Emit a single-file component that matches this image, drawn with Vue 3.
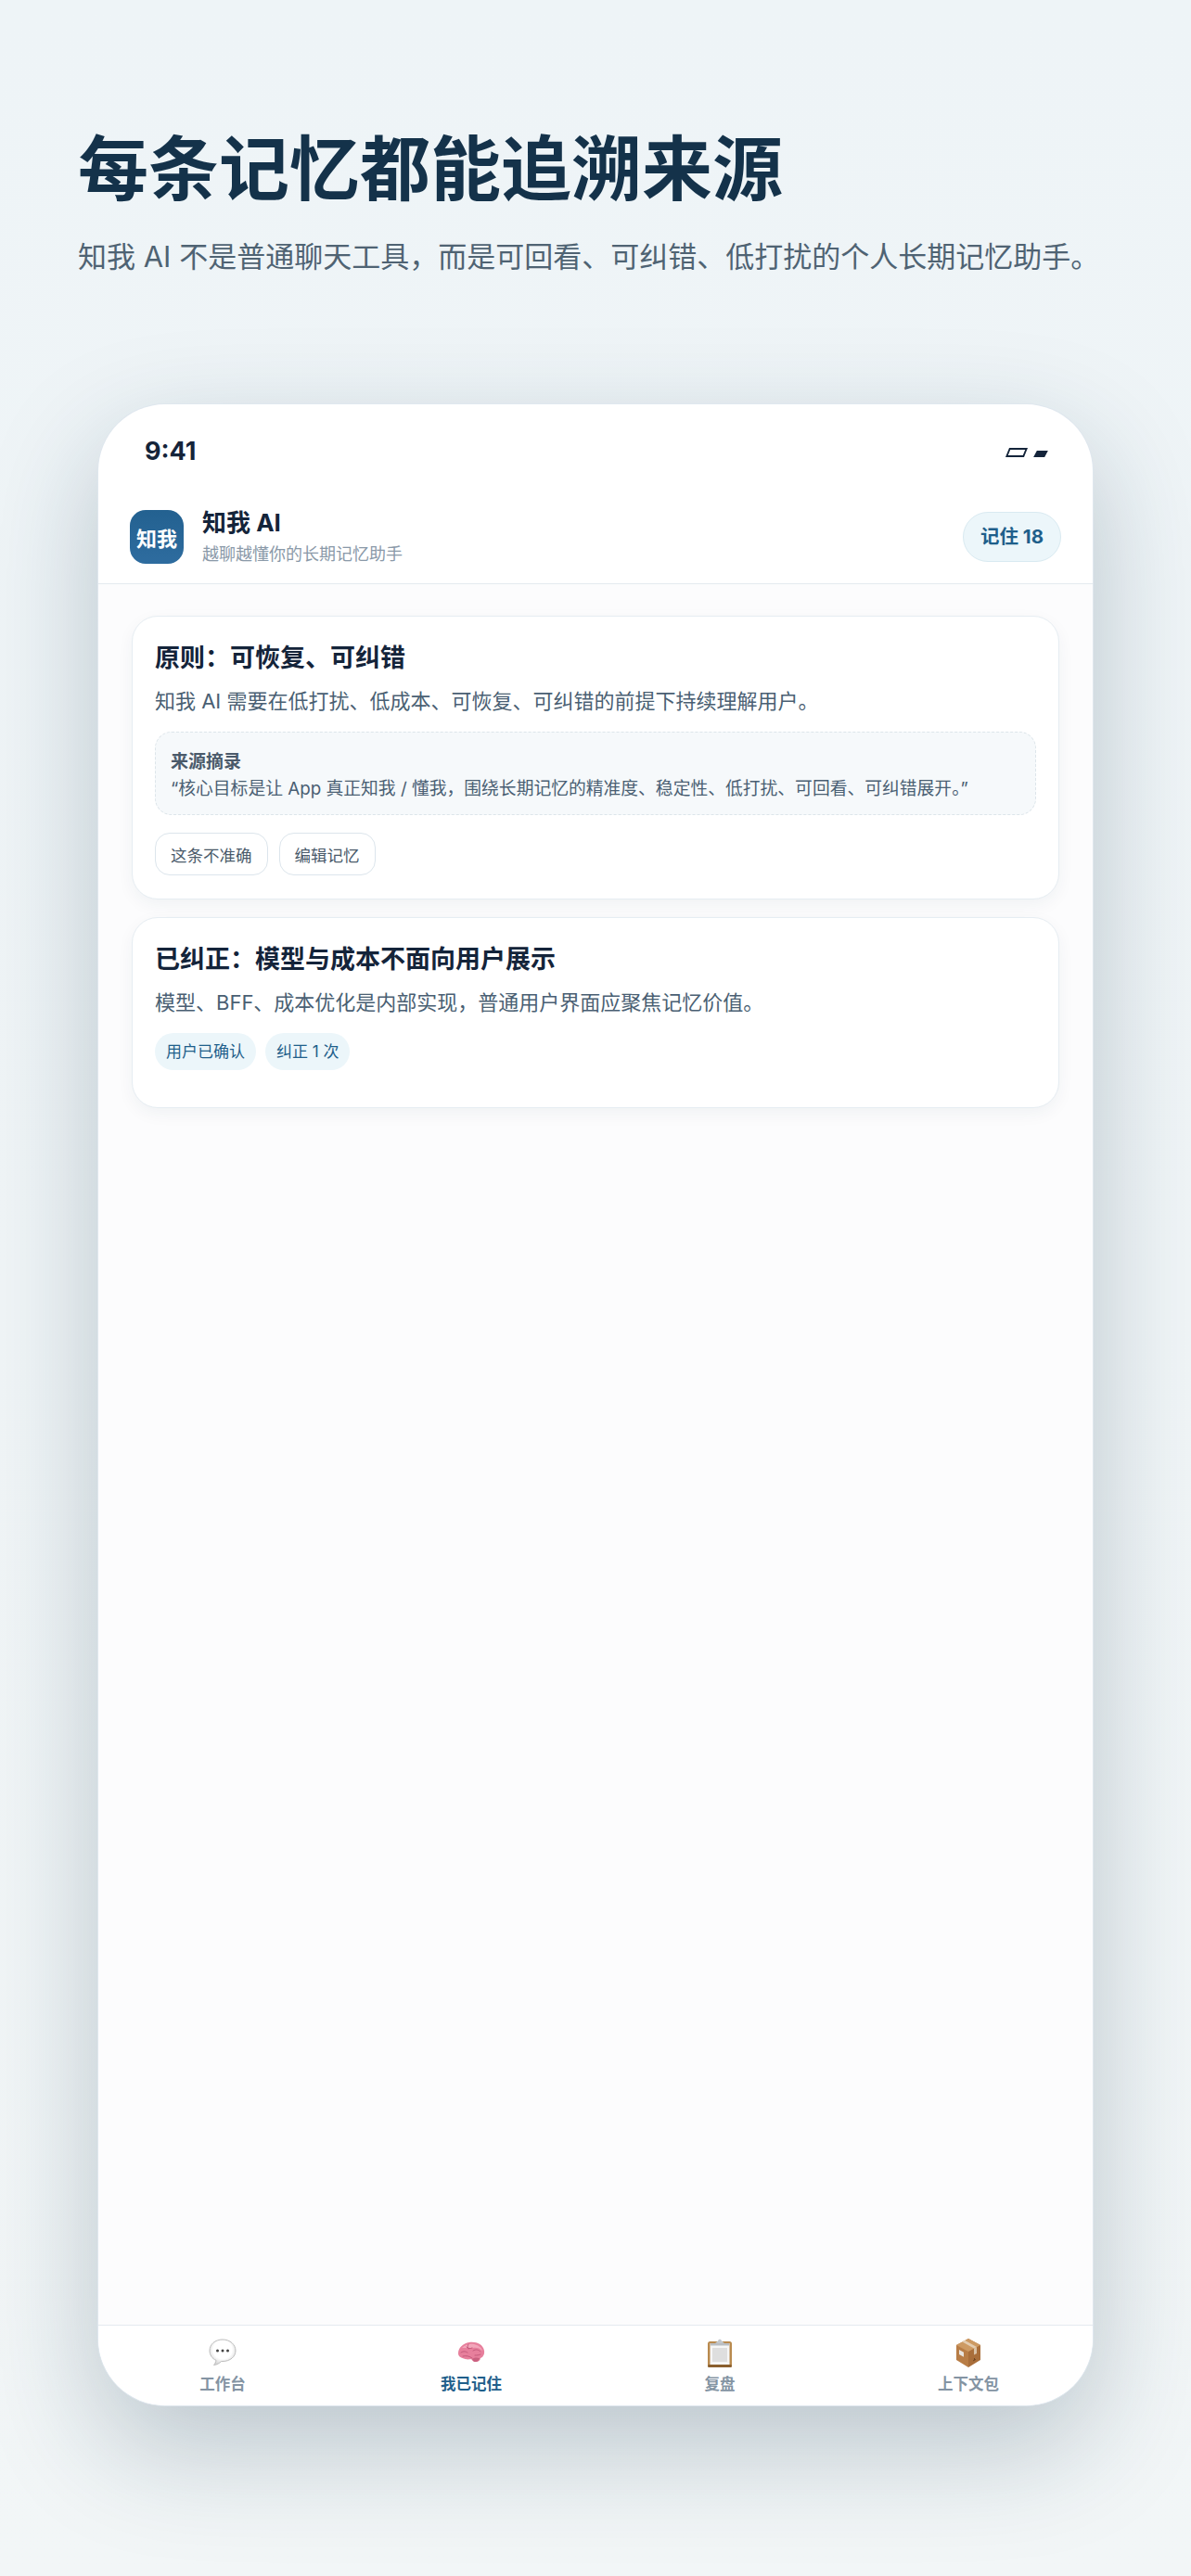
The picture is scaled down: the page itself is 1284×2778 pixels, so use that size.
<script setup>
const tabs = [
  { key: 'chat', label: '工作台' },
  { key: 'brain', label: '我已记住', active: true },
  { key: 'board', label: '复盘' },
  { key: 'box', label: '上下文包' }
]
</script>

<template>
  <div class="page">
    <div class="hero">
      <h1 class="hero-title">每条记忆都能追溯来源</h1>
      <p class="hero-sub">知我 AI 不是普通聊天工具，而是可回看、可纠错、低打扰的个人长期记忆助手。</p>
    </div>

    <div class="phone">
      <div class="status-bar">
        <span class="time">9:41</span>
        <div class="status-icons">
          <i class="status-outline"></i>
          <i class="status-solid"></i>
        </div>
      </div>

      <header class="app-header">
        <div class="logo">知我</div>
        <div class="brand">
          <div class="brand-name">知我 AI</div>
          <div class="brand-sub">越聊越懂你的长期记忆助手</div>
        </div>
        <div class="count-pill">记住 18</div>
      </header>

      <main class="content">
        <section class="card">
          <h3 class="card-title">原则：可恢复、可纠错</h3>
          <p class="card-text">知我 AI 需要在低打扰、低成本、可恢复、可纠错的前提下持续理解用户。</p>
          <div class="source">
            <div class="source-title">来源摘录</div>
            <div class="source-text">“核心目标是让 App 真正知我 / 懂我，围绕长期记忆的精准度、稳定性、低打扰、可回看、可纠错展开。”</div>
          </div>
          <div class="actions">
            <button class="action-btn">这条不准确</button>
            <button class="action-btn">编辑记忆</button>
          </div>
        </section>

        <section class="card">
          <h3 class="card-title">已纠正：模型与成本不面向用户展示</h3>
          <p class="card-text">模型、BFF、成本优化是内部实现，普通用户界面应聚焦记忆价值。</p>
          <div class="tags">
            <span class="tag">用户已确认</span>
            <span class="tag">纠正 1 次</span>
          </div>
        </section>
      </main>

      <nav class="tabbar">
        <div v-for="tab in tabs" :key="tab.key" class="tab" :class="{ active: tab.active }">
          <svg v-if="tab.key === 'chat'" class="tab-icon" viewBox="0 0 32 32">
            <defs>
              <radialGradient id="bubbleFill" cx="50%" cy="40%" r="60%">
                <stop offset="0.6" stop-color="#ffffff" />
                <stop offset="1" stop-color="#d4d4d4" />
              </radialGradient>
            </defs>
            <path d="M16 2C8 2 2 7 2 14c0 5 3 8.600 7 10.400-.3 2-1.300 3.800-2.500 5.100 3-.2 6-1.800 8-4h1.500c8 0 14-5 14-11.500S24 2 16 2z" fill="url(#bubbleFill)" stroke="#bdbdbd" stroke-width="1" />
            <circle cx="10.500" cy="14" r="1.500" fill="#444" />
            <circle cx="16" cy="14" r="1.500" fill="#444" />
            <circle cx="21.500" cy="14" r="1.500" fill="#444" />
          </svg>

          <svg v-else-if="tab.key === 'brain'" class="tab-icon" viewBox="0 0 32 32">
            <path d="M2 17c0-6 5-11 12-12 7-1 15 2 16 9 .6 4-1 7-4 8-.4 3-3 4.500-5.500 4-2 0-3-1-4-2.500-2-.5-4 .4-7-.5-4-1-7.500-2.500-7.500-6z" fill="#e77f9c" />
            <path d="M6 11c3-3 8-5 13-4 4 1 8 3 9 7-3-3-7-4-10-3-4 0-8 0-12 0z" fill="#f2a6ba" />
            <path d="M5 16c3-2 5-1 7 0M11 10c2 2 4 2 6 1M18 14c3-2 6-1 8 1M7 20c4-1 7 0 10 2M20 19c2 0 4 0 6-1M13 7c-1 2-1 3 0 5" fill="none" stroke="#c45a7b" stroke-width="1" stroke-linecap="round" />
            <path d="M17 23c1.500-1.500 5-2 8-1-.4 3-3 4.500-5 4-1.500 0-2.500-1.500-3-3z" fill="#c9607f" />
          </svg>

          <svg v-else-if="tab.key === 'board'" class="tab-icon" viewBox="0 0 32 32">
            <rect x="3" y="4" width="26" height="28" rx="2.500" fill="#b98a4e" />
            <rect x="3" y="29" width="26" height="3" rx="1.500" fill="#8a5f2e" />
            <rect x="5.500" y="6" width="21" height="23" fill="#f6f6f6" />
            <rect x="8" y="11" width="16" height="15" fill="#dedede" />
            <rect x="6" y="6" width="20" height="2.500" fill="#b9bdc2" />
            <path d="M11 6l3-2.500c.5-2.500 3.500-2.500 4 0L21 6z" fill="#c2c7cc" />
          </svg>

          <svg v-else class="tab-icon" viewBox="0 0 32 32">
            <path d="M16 1L3 8v16l13 8z" fill="#b87d46" />
            <path d="M16 1l13 7v16l-13 8z" fill="#a96e3a" />
            <path d="M16 1L3 8l13 7 13-7z" fill="#cd9a63" />
            <path d="M9 4.300l13 7.300 3-1.600L12 2.700z" fill="#e3ccb0" />
            <path d="M22 11.600l3-1.600v7l-3 1.600z" fill="#d9c2a6" />
            <path d="M6 13l5 2.700v5L6 18z" fill="#e8e4de" />
            <path d="M21 25l3-1.600M22.500 22v2" stroke="#6e4520" stroke-width="1" fill="none" />
          </svg>
          <span class="tab-label">{{ tab.label }}</span>
        </div>
      </nav>
    </div>
  </div>
</template>

<style>
html, body {
  margin: 0;
  padding: 0;
}
</style>

<style scoped>
.page {
  width: 1284px;
  height: 2778px;
  overflow: hidden;
  box-sizing: border-box;
  padding: 130px 106px 0;
  background: linear-gradient(180deg, #eef4f7 0%, #f2f6f7 100%);
  font-family: Inter, "Noto Sans CJK SC", sans-serif;
}

.hero {
  margin-left: -22px;
  height: 306px;
}

.hero-title {
  margin: 0;
  font-size: 76px;
  line-height: 104px;
  font-weight: 700;
  color: #14324a;
}

.hero-sub {
  margin: 0;
  margin-top: 21px;
  font-size: 31px;
  line-height: 44px;
  color: #4f6373;
  white-space: nowrap;
}

.phone {
  height: 2158px;
  display: flex;
  flex-direction: column;
  overflow: hidden;
  box-sizing: border-box;
  background: #fff;
  border-radius: 72px;
  box-shadow: 0 0 0 1px #dfe7ee, 0 44px 120px rgba(20, 50, 74, 0.25);
}

.status-bar {
  display: flex;
  justify-content: space-between;
  align-items: center;
  padding: 30px 50px 0;
  height: 40px;
}

.time {
  font-size: 27px;
  font-weight: 700;
  color: #14243a;
}

.status-icons {
  display: flex;
  align-items: flex-end;
  gap: 10px;
  margin-top: 4px;
}

.status-outline {
  display: block;
  width: 16px;
  height: 6px;
  border: 2px solid #14243a;
  transform: skewX(-22deg);
}

.status-solid {
  display: block;
  width: 12px;
  height: 7px;
  background: #14243a;
  transform: skewX(-28deg);
}

.app-header {
  display: flex;
  align-items: center;
  padding: 41px 34px 19px;
  border-bottom: 1px solid #e4eaef;
}

.logo {
  width: 58px;
  height: 58px;
  flex-shrink: 0;
  display: flex;
  align-items: center;
  justify-content: center;
  border-radius: 17px;
  background: linear-gradient(180deg, #236190, #2e6c9f);
  color: #fff;
  font-size: 22px;
  font-weight: 700;
}

.brand {
  flex: 1;
  margin-left: 20px;
}

.brand-name {
  font-size: 26px;
  line-height: 34px;
  font-weight: 700;
  color: #14243a;
}

.brand-sub {
  margin-top: 5px;
  font-size: 18px;
  line-height: 24px;
  color: #8a99a8;
}

.count-pill {
  padding: 0 18px;
  height: 52px;
  line-height: 52px;
  border: 1px solid #d9eaf1;
  border-radius: 27px;
  background: #ecf6fa;
  color: #1f5f8b;
  font-size: 20.500px;
  font-weight: 700;
}

.content {
  flex: 1;
  display: flex;
  flex-direction: column;
  gap: 19px;
  padding: 34px 36px;
  background: #fcfcfd;
}

.card {
  padding: 26px 24px 25px;
  border: 1px solid #e6edf2;
  border-radius: 28px;
  background: #fff;
  box-shadow: 0 6px 18px rgba(20, 50, 74, 0.05);
}

.card-title {
  margin: 0;
  font-size: 27px;
  line-height: 38px;
  font-weight: 700;
  color: #14243a;
}

.card-text {
  margin: 10px 0 0;
  font-size: 22px;
  line-height: 34px;
  color: #4a5f73;
}

.source {
  margin-top: 16px;
  padding: 17px 16px 13px;
  border: 1px dashed #dde5ea;
  border-radius: 18px;
  background: #f6f9fb;
}

.source-title {
  font-size: 19px;
  line-height: 29px;
  font-weight: 700;
  color: #4a5a6a;
}

.source-text {
  font-size: 18.800px;
  line-height: 29px;
  color: #4a5f73;
  white-space: nowrap;
}

.actions {
  display: flex;
  gap: 12px;
  margin-top: 19px;
}

.action-btn {
  height: 46px;
  padding: 0 16px;
  border: 1px solid #dce5ec;
  border-radius: 16px;
  background: #fff;
  color: #4a5a6a;
  font-family: inherit;
  font-size: 17.500px;
}

.tags {
  display: flex;
  gap: 10px;
  margin-top: 16px;
  margin-bottom: 15px;
}

.tag {
  height: 40px;
  line-height: 40px;
  padding: 0 12px;
  border-radius: 20px;
  background: #ecf6fa;
  color: #1f5f8b;
  font-size: 17px;
}

.tabbar {
  display: grid;
  grid-template-columns: repeat(4, 1fr);
  height: 86px;
  border-top: 1px solid #e4eaef;
  background: #fff;
}

.tab {
  display: flex;
  flex-direction: column;
  align-items: center;
  padding-top: 13px;
}

.tab-icon {
  width: 32px;
  height: 32px;
}

.tab-label {
  margin-top: 6px;
  font-size: 16.500px;
  line-height: 24px;
  font-weight: 600;
  color: #8494a3;
}

.tab.active .tab-label {
  font-weight: 700;
  color: #1f5f8b;
}
</style>
